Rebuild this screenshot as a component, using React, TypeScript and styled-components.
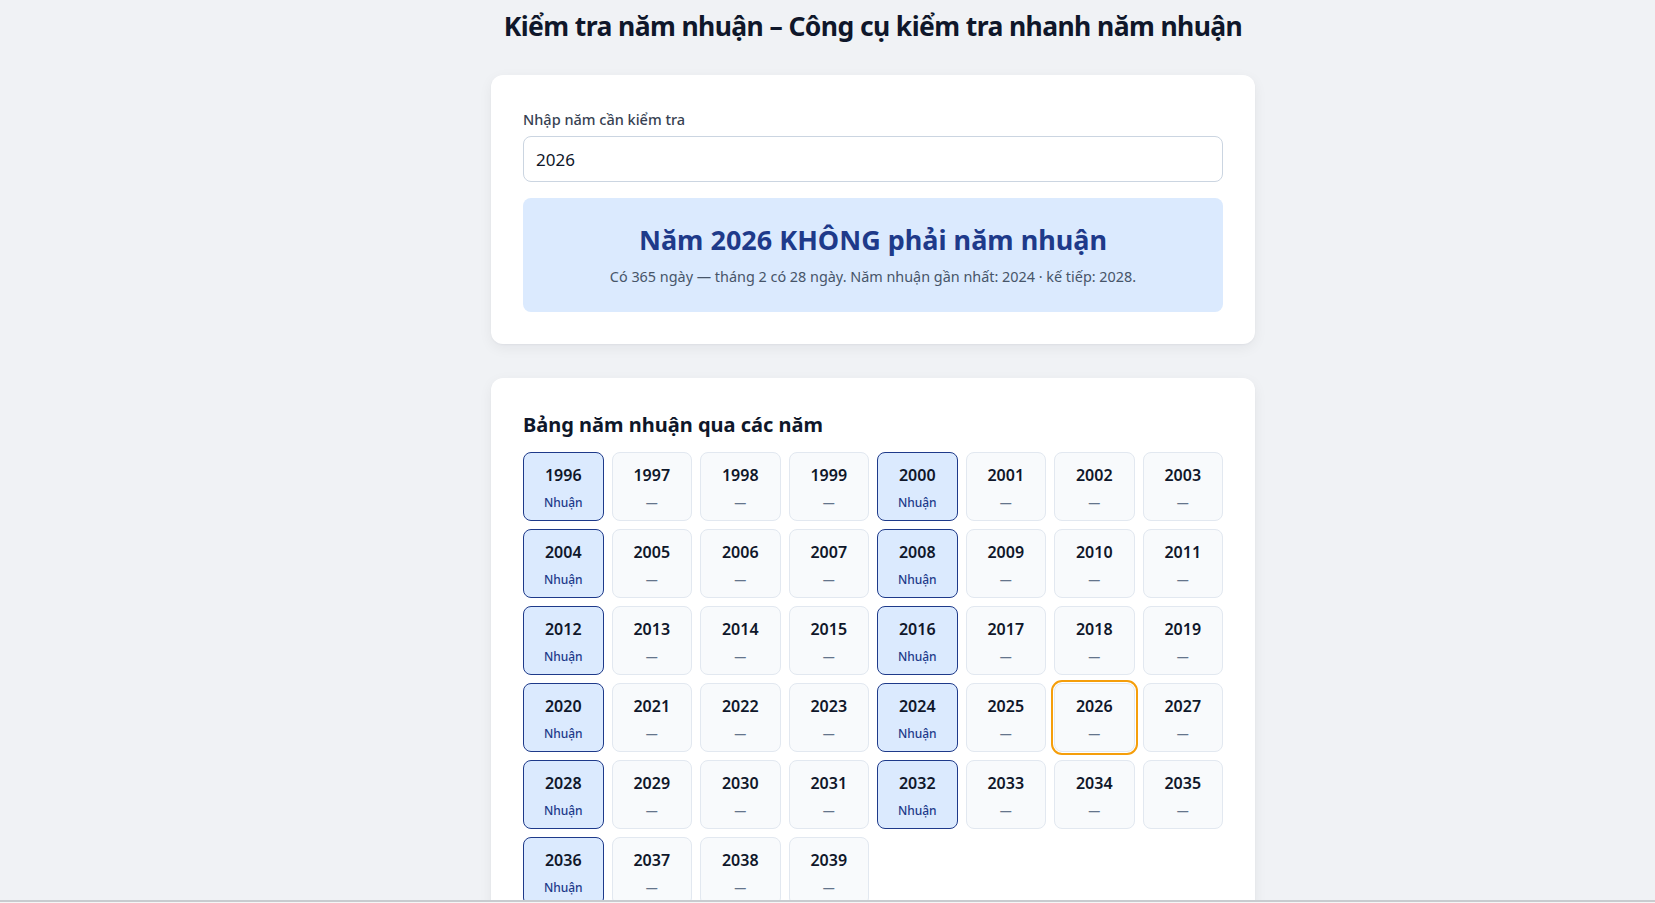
import React, { useState } from "react";
import styled, { createGlobalStyle } from "styled-components";

const Global = createGlobalStyle`
  * { box-sizing: border-box; }
  html, body { margin: 0; padding: 0; }
  body {
    background: #f0f2f5;
    font-family: "Noto Sans", "Open Sans", sans-serif;
    color: #0f172a;
  }
`;

const Page = styled.div`
  display: flex;
  flex-direction: column;
  align-items: center;
  padding: 9px 0 40px 91px;
`;

const Title = styled.h1`
  margin: 0 0 32px;
  font-size: 26.5px;
  line-height: 34px;
  font-weight: 700;
  letter-spacing: -0.6px;
  color: #0f172a;
  white-space: nowrap;
`;

const Card = styled.section`
  width: 764px;
  background: #ffffff;
  border-radius: 12px;
  padding: 32px;
  box-shadow: 0 1px 2px rgba(15, 23, 42, 0.04), 0 4px 14px rgba(15, 23, 42, 0.06);
  & + & {
    margin-top: 34px;
  }
`;

const Label = styled.label`
  display: block;
  padding-top: 2px;
  font-size: 14.5px;
  line-height: 21px;
  font-weight: 500;
  color: #374151;
  margin-bottom: 6px;
`;

const Input = styled.input`
  display: block;
  width: 100%;
  height: 46px;
  border: 1px solid #cbd5e1;
  border-radius: 8px;
  padding: 0 12px;
  font-family: inherit;
  font-size: 17px;
  color: #0f172a;
  background: #fff;
  outline: none;
`;

const Result = styled.div`
  margin-top: 16px;
  background: #dbeafe;
  border-radius: 8px;
  padding: 25px 16px 25px;
  text-align: center;
`;

const ResultTitle = styled.div`
  font-size: 27px;
  line-height: 34px;
  font-weight: 700;
  color: #1e3a8a;
`;

const ResultSub = styled.div`
  margin-top: 10px;
  font-size: 14.4px;
  line-height: 20px;
  color: #475569;
`;

const Heading = styled.h2`
  margin: 1px 0 13px;
  font-size: 20px;
  line-height: 28px;
  font-weight: 700;
  color: #0f172a;
`;

const Grid = styled.div`
  display: grid;
  grid-template-columns: repeat(8, 1fr);
  gap: 8px;
`;

const Tile = styled.div<{ $leap: boolean; $current: boolean }>`
  height: 69px;
  border-radius: 8px;
  border: 1px solid ${(p) => (p.$leap ? "#1e3a8a" : "#e2e8f0")};
  background: ${(p) => (p.$leap ? "#dbeafe" : "#f8fafc")};
  padding: 11px 0 9px;
  display: flex;
  flex-direction: column;
  align-items: center;
  gap: 9px;
  outline: ${(p) => (p.$current ? "2px solid #f59e0b" : "none")};
  outline-offset: 1px;
`;

const Year = styled.div`
  font-size: 16px;
  line-height: 22px;
  font-weight: 600;
  color: #0f172a;
`;

const Sub = styled.div<{ $leap: boolean }>`
  font-size: 12px;
  line-height: 16px;
  font-weight: 500;
  color: ${(p) => (p.$leap ? "#1e3a8a" : "#64748b")};
`;

const BottomEdge = styled.div`
  position: fixed;
  left: 0;
  right: 0;
  bottom: 0;
  height: 3px;
  border-top: 2px solid #c9cbcf;
  background: #f6f6f6;
`;

const isLeap = (y: number) => (y % 4 === 0 && y % 100 !== 0) || y % 400 === 0;

export default function App() {
  const [value, setValue] = useState("2026");
  const year = parseInt(value, 10) || 2026;
  const leap = isLeap(year);
  let prev = year - 1;
  while (!isLeap(prev)) prev--;
  let next = year + 1;
  while (!isLeap(next)) next++;
  const years = Array.from({ length: 44 }, (_, i) => 1996 + i);

  return (
    <>
      <Global />
      <Page>
        <Title>Kiểm tra năm nhuận – Công cụ kiểm tra nhanh năm nhuận</Title>
        <Card>
          <Label htmlFor="year">Nhập năm cần kiểm tra</Label>
          <Input id="year" value={value} onChange={(e) => setValue(e.target.value)} />
          <Result>
            <ResultTitle>
              Năm {year} {leap ? "LÀ" : "KHÔNG phải"} năm nhuận
            </ResultTitle>
            <ResultSub>
              Có {leap ? 366 : 365} ngày — tháng 2 có {leap ? 29 : 28} ngày. Năm nhuận gần nhất: {prev} · kế tiếp: {next}.
            </ResultSub>
          </Result>
        </Card>
        <Card>
          <Heading>Bảng năm nhuận qua các năm</Heading>
          <Grid>
            {years.map((y) => {
              const l = isLeap(y);
              return (
                <Tile key={y} $leap={l} $current={y === year}>
                  <Year>{y}</Year>
                  <Sub $leap={l}>{l ? "Nhuận" : "—"}</Sub>
                </Tile>
              );
            })}
          </Grid>
        </Card>
      </Page>
      <BottomEdge />
    </>
  );
}
